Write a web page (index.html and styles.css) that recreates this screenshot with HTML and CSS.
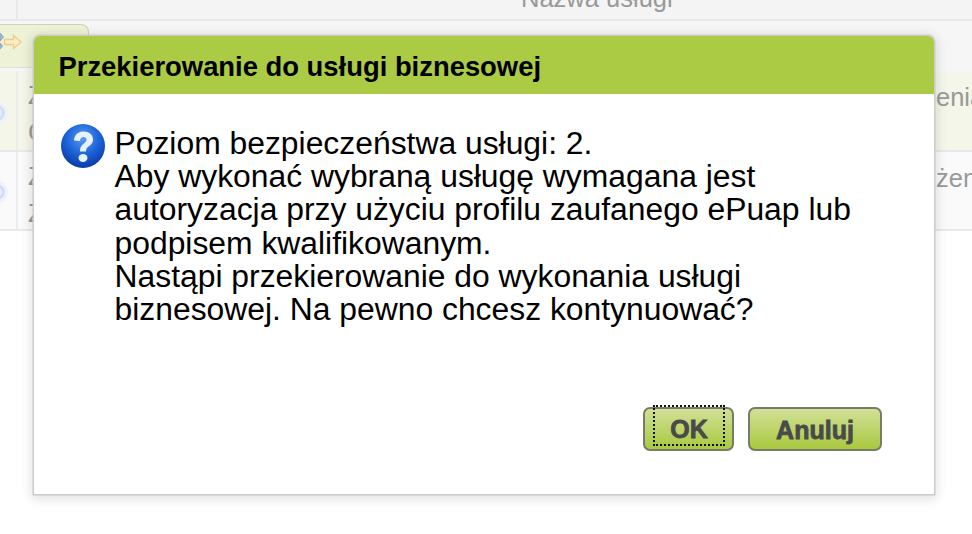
FILE: index.html
```html
<!DOCTYPE html>
<html lang="pl">
<head>
<meta charset="utf-8">
<title>Przekierowanie do usługi biznesowej</title>
<link rel="stylesheet" href="styles.css">
</head>
<body>
<div class="page">
  <div class="head-row"><div class="head-first"></div><div class="head-title">Nazwa usługi</div></div>
  <div class="toolbar-row">
    <div class="toolbar">
      <svg class="arrows" width="24" height="22" viewBox="0 0 24 22">
        <path d="M0 1L3.500 5 0 9Z M0 11L2.500 14 0 17Z" fill="#a9b8cf" stroke="#8fa3bf" stroke-width="1"/>
        <path d="M4.500 7.500h9V3.500l7.500 6.500-7.500 6.500v-4h-9z" fill="#fdeec0" stroke="#eccd8e" stroke-width="1.400"/>
      </svg>
    </div>
  </div>
  <div class="row row-a">
    <div class="radio-cell"><span class="radio"></span></div>
    <div class="text-cell"><span>Z</span><span>G</span></div>
    <div class="end-cell">enia</div>
  </div>
  <div class="row row-b">
    <div class="radio-cell"><span class="radio"></span></div>
    <div class="text-cell"><span>Z</span><span>Z</span></div>
    <div class="end-cell">żenie</div>
  </div>
</div>

<div class="dialog" role="dialog">
  <div class="dialog-title">Przekierowanie do usługi biznesowej</div>
  <div class="dialog-body">
    <svg class="qicon" width="46" height="46" viewBox="0 0 46 46">
      <defs>
        <radialGradient id="ball" cx="50%" cy="32%" r="68%">
          <stop offset="0" stop-color="#5a9cf0"/>
          <stop offset="0.550" stop-color="#1c63d8"/>
          <stop offset="1" stop-color="#0a3aa8"/>
        </radialGradient>
      </defs>
      <circle cx="23" cy="23" r="22" fill="url(#ball)"/>
      <path d="M14 17.500C14.500 11 19 8.500 23.500 8.500 29 8.500 33 11.500 33 16.500 33 20.500 30.500 22 28 24 26.500 25.200 26 26.500 26 28.500H20C19.800 25 20.800 23 23 21.200 25.300 19.400 26.500 18.300 26.500 16.800 26.500 15 25.200 14 23.500 14 21.500 14 20.300 15.300 20 18Z" fill="#e8f1ff"/>
      <ellipse cx="23" cy="35" rx="4.500" ry="4" fill="#e8f1ff"/>
    </svg>
    <p class="message">Poziom bezpieczeństwa usługi: 2.<br>Aby wykonać wybraną usługę wymagana jest<br>autoryzacja przy użyciu profilu zaufanego ePuap lub<br>podpisem kwalifikowanym.<br>Nastąpi przekierowanie do wykonania usługi<br>biznesowej. Na pewno chcesz kontynuować?</p>
  </div>
  <div class="dialog-actions">
    <button class="btn btn-ok" type="button"><span class="focus">OK</span></button>
    <button class="btn btn-cancel" type="button">Anuluj</button>
  </div>
</div>
</body>
</html>
```
FILE: styles.css
```css
* { box-sizing: border-box; }
html, body { margin: 0; height: 100%; background: #fff; overflow: hidden; }
body { font-family: "Liberation Sans", Arial, sans-serif; color: #000; }

.page { width: 972px; height: 534px; display: flex; flex-direction: column; }

.head-row { height: 21px; display: flex; background: #f4f4f4; border-bottom: 2px solid #e8e8e8; }
.head-first { width: 18px; border-right: 2px solid #e8e8e8; }
.head-title { flex: 1; font-size: 25.500px; line-height: 20px; margin-top: -12px; padding-left: 503px; color: #999; }

.toolbar-row { height: 50px; background: #f6f6f6; padding-top: 3px; }
.toolbar { width: 89px; height: 44px; background: #eef2d6; border: 1px solid #cfd2bb; border-left: 0; border-radius: 0 8px 0 0; border-bottom-color: #ddd; }
.arrows { display: block; margin-top: 7px; }

.row { display: flex; border-bottom: 2px solid #e9e9e9; }
.row-a { height: 81px; background: #f3f6e8; }
.row-b { height: 79px; background: #fafafa; }
.radio-cell { width: 18px; flex: none; border-right: 2px solid #ececec; display: flex; align-items: center; justify-content: flex-end; padding: 0 8px 0 0; overflow: hidden; }
.row-a .radio-cell { padding-top: 5px; }
.row-b .radio-cell { padding-top: 3px; }
.radio { width: 22px; height: 22px; flex: none; border-radius: 50%; background: #e6eefa; border: 3px solid #eef2f8; box-shadow: inset 0 0 0 3px #cfdff5; }
.text-cell { flex: 1; padding: 6px 0 0 10px; font-size: 25.500px; line-height: 37px; color: #999; display: flex; flex-direction: column; }
.end-cell { flex: none; width: 37px; font-size: 25.500px; line-height: 32px; padding: 10px 0 0 1px; color: #999; white-space: nowrap; overflow: hidden; }

.dialog { position: absolute; left: 34px; top: 36px; width: 900px; height: 458px; background: #fff; border-radius: 6px 6px 0 0; box-shadow: 0 0 0 1.500px #cbcbcb, 0 2px 12px 3px rgba(0, 0, 0, 0.12); display: flex; flex-direction: column; }
.dialog-title { height: 58px; flex: none; background: #abcb45; border-radius: 6px 6px 0 0; padding-left: 24.500px; font-size: 27.400px; line-height: 61px; font-weight: 700; color: #000; }
.dialog-body { flex: 1; display: flex; padding: 29px 0 0 26px; }
.qicon { flex: none; margin-right: 8.500px; }
.message { margin: 0; padding-top: 4px; font-size: 31.850px; line-height: 33.200px; color: #000; white-space: nowrap; }

.dialog-actions { display: flex; justify-content: flex-end; gap: 14px; padding-right: 52px; padding-bottom: 43px; }
.btn { height: 44px; padding: 2px 0 0; border: 2px solid #767c68; border-radius: 7px; background: linear-gradient(#d2e096, #a9c93f); font-family: "Liberation Sans", Arial, sans-serif; font-weight: 700; font-size: 25px; color: #4a4a4a; -webkit-text-stroke: 0.800px #4a4a4a; cursor: pointer; }
.btn-ok { width: 91px; position: relative; }
.btn-cancel { width: 134px; }
.focus { position: absolute; left: 8px; top: -4px; width: 72px; height: 41px; padding-top: 8px; border: 2px dotted #111; display: flex; align-items: center; justify-content: center; }
```
